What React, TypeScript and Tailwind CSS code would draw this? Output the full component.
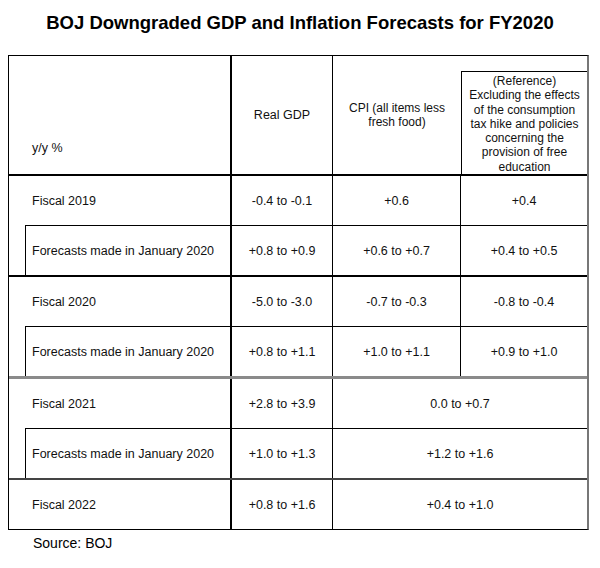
import React from 'react';

const font = { fontFamily: '"Liberation Sans", Arial, sans-serif' };

interface Group {
  year: string;
  gdp: string;
  cpi: string;
  ref?: string;
  jan?: { gdp: string; cpi: string; ref?: string };
  sep: string;
}

const groups: Group[] = [
  {
    year: 'Fiscal 2019',
    gdp: '-0.4 to -0.1',
    cpi: '+0.6',
    ref: '+0.4',
    jan: { gdp: '+0.8 to +0.9', cpi: '+0.6 to +0.7', ref: '+0.4 to +0.5' },
    sep: 'border-b-2 border-b-black',
  },
  {
    year: 'Fiscal 2020',
    gdp: '-5.0 to -3.0',
    cpi: '-0.7 to -0.3',
    ref: '-0.8 to -0.4',
    jan: { gdp: '+0.8 to +1.1', cpi: '+1.0 to +1.1', ref: '+0.9 to +1.0' },
    sep: 'border-b-[3px] border-b-[#8a8a8a]',
  },
  {
    year: 'Fiscal 2021',
    gdp: '+2.8 to +3.9',
    cpi: '0.0 to +0.7',
    jan: { gdp: '+1.0 to +1.3', cpi: '+1.2 to +1.6' },
    sep: 'border-b-2 border-b-[#444]',
  },
  {
    year: 'Fiscal 2022',
    gdp: '+0.8 to +1.6',
    cpi: '+0.4 to +1.0',
    sep: '',
  },
];

function Values({ gdp, cpi, ref, top }: { gdp: string; cpi: string; ref?: string; top?: boolean }) {
  const t = top ? 'border-t border-black' : '';
  return (
    <>
      <div className={`w-[101px] flex items-center justify-center border-r border-black ${t}`}>{gdp}</div>
      {ref !== undefined ? (
        <>
          <div className={`w-[128px] flex items-center justify-center border-r border-black ${t}`}>{cpi}</div>
          <div className={`flex-1 flex items-center justify-center ${t}`}>{ref}</div>
        </>
      ) : (
        <div className={`flex-1 flex items-center justify-center ${t}`}>{cpi}</div>
      )}
    </>
  );
}

export default function App() {
  return (
    <div className="w-[600px] h-[568px] bg-white text-[#111]" style={font}>
      <h1 className="pt-[12px] text-center text-[18.5px] leading-[22px] font-bold text-black">
        BOJ Downgraded GDP and Inflation Forecasts for FY2020
      </h1>

      <div className="ml-[8px] mt-[21px] w-[581px] border border-black border-r-2 border-r-[#777] text-[12.5px] leading-[14px]">
        {/* Header */}
        <div className="flex h-[120px] border-b-2 border-black">
          <div className="w-[223px] border-r-2 border-black flex items-end pl-[23px] pb-[19px]">y/y %</div>
          <div className="w-[101px] border-r border-black flex items-center justify-center">Real GDP</div>
          <div className="w-[128px] flex items-center justify-center text-center text-[12px] leading-[14px]">
            CPI (all items less
            <br />
            fresh food)
          </div>
          <div className="flex-1 pt-[15px] flex">
            <div className="flex-1 border-l border-t border-black text-center text-[12px] leading-[14.3px] pt-[2px]">
              (Reference)
              <br />
              Excluding the effects
              <br />
              of the consumption
              <br />
              tax hike and policies
              <br />
              concerning the
              <br />
              provision of free
              <br />
              education
            </div>
          </div>
        </div>

        {groups.map((g) => (
          <div key={g.year} className={g.sep}>
            <div className="flex h-[49px]">
              <div className="w-[223px] border-r-2 border-black flex items-center pl-[23px]">{g.year}</div>
              <Values gdp={g.gdp} cpi={g.cpi} ref={g.ref} />
            </div>
            {g.jan && (
              <div className="flex h-[50px]">
                <div className="w-[223px] border-r-2 border-black pl-[16px] flex">
                  <div className="flex-1 border-l border-t border-black flex items-center pl-[6px]">
                    Forecasts made in January 2020
                  </div>
                </div>
                <Values gdp={g.jan.gdp} cpi={g.jan.cpi} ref={g.jan.ref} top />
              </div>
            )}
          </div>
        ))}
      </div>

      <p className="ml-[33px] mt-[5px] text-[14px] leading-[16px] text-black">Source: BOJ</p>
    </div>
  );
}
